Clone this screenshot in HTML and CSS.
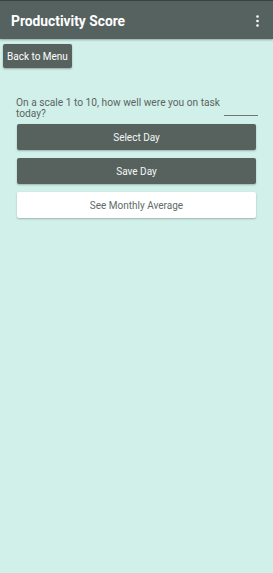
FILE: index.html
```html
<!DOCTYPE html>
<html lang="en">
<head>
  <meta charset="UTF-8" />
  <meta name="viewport" content="width=device-width, initial-scale=1.0"/>
  <title>Productivity Score</title>
  <link rel="stylesheet" href="styles.css">
</head>
<body>

<div class="appbar">
  <span class="title">Productivity Score</span>
  <svg class="menu" width="3" height="12" viewBox="0 0 3 12">
    <circle cx="1.5" cy="1.5" r="1.3" fill="#fff"/>
    <circle cx="1.5" cy="6" r="1.3" fill="#fff"/>
    <circle cx="1.5" cy="10.5" r="1.3" fill="#fff"/>
  </svg>
</div>

<div class="back-row">
  <button class="back-button">Back to Menu</button>
</div>

<div class="content">
  <div class="question-row">
    <span class="question">On a scale 1 to 10, how well were you on task today?</span>
    <input class="score-input" type="text">
  </div>
  <button class="btn dark">Select Day</button>
  <button class="btn dark">Save Day</button>
  <button class="btn light">See Monthly Average</button>
</div>

</body>
</html>
```

FILE: styles.css
```css
body {
  margin: 0;
  font-family: Roboto, "Liberation Sans", sans-serif;
  background-color: #d1f0e9;
  min-height: 573px;
}

.appbar {
  height: 39px;
  background-color: #566260;
  border-top: 1px solid #3a4240;
  box-sizing: border-box;
  display: flex;
  align-items: center;
  justify-content: space-between;
  padding: 0 14px 0 11px;
  box-shadow: 0 1px 2px rgba(0, 0, 0, 0.3);
}
.appbar .title {
  color: #fff;
  font-size: 13.8px;
  font-weight: bold;
  margin-top: 1px;
}
.menu {
  display: block;
  margin-top: 2px;
}

.back-row {
  padding: 5px 3px 0;
}
.back-button {
  height: 24px;
  padding: 0 4px;
  background-color: #57625f;
  color: #fff;
  border: none;
  border-radius: 2px;
  font-family: inherit;
  font-size: 10px;
  box-shadow: 0 1px 2px rgba(0, 0, 0, 0.3);
}

.content {
  padding: 29px 17px 0;
  display: flex;
  flex-direction: column;
  gap: 8px;
}
.question-row {
  display: flex;
  align-items: flex-end;
  justify-content: space-between;
  margin: 0 -2px -3px -1px;
}
.question {
  color: #5a6562;
  font-size: 10.2px;
  line-height: 11px;
  width: 207px;
}
.score-input {
  width: 34px;
  border: none;
  border-bottom: 1px solid #6f7875;
  background: transparent;
  height: 10px;
  padding: 0;
  margin-bottom: 3px;
}
.btn {
  height: 26px;
  border: none;
  border-radius: 2px;
  font-family: inherit;
  font-size: 10px;
  box-shadow: 0 1px 2px rgba(0, 0, 0, 0.25);
}
.btn.dark {
  background-color: #57625f;
  color: #f4f6f5;
}
.btn.light {
  background-color: #fff;
  color: #616b68;
}
```
